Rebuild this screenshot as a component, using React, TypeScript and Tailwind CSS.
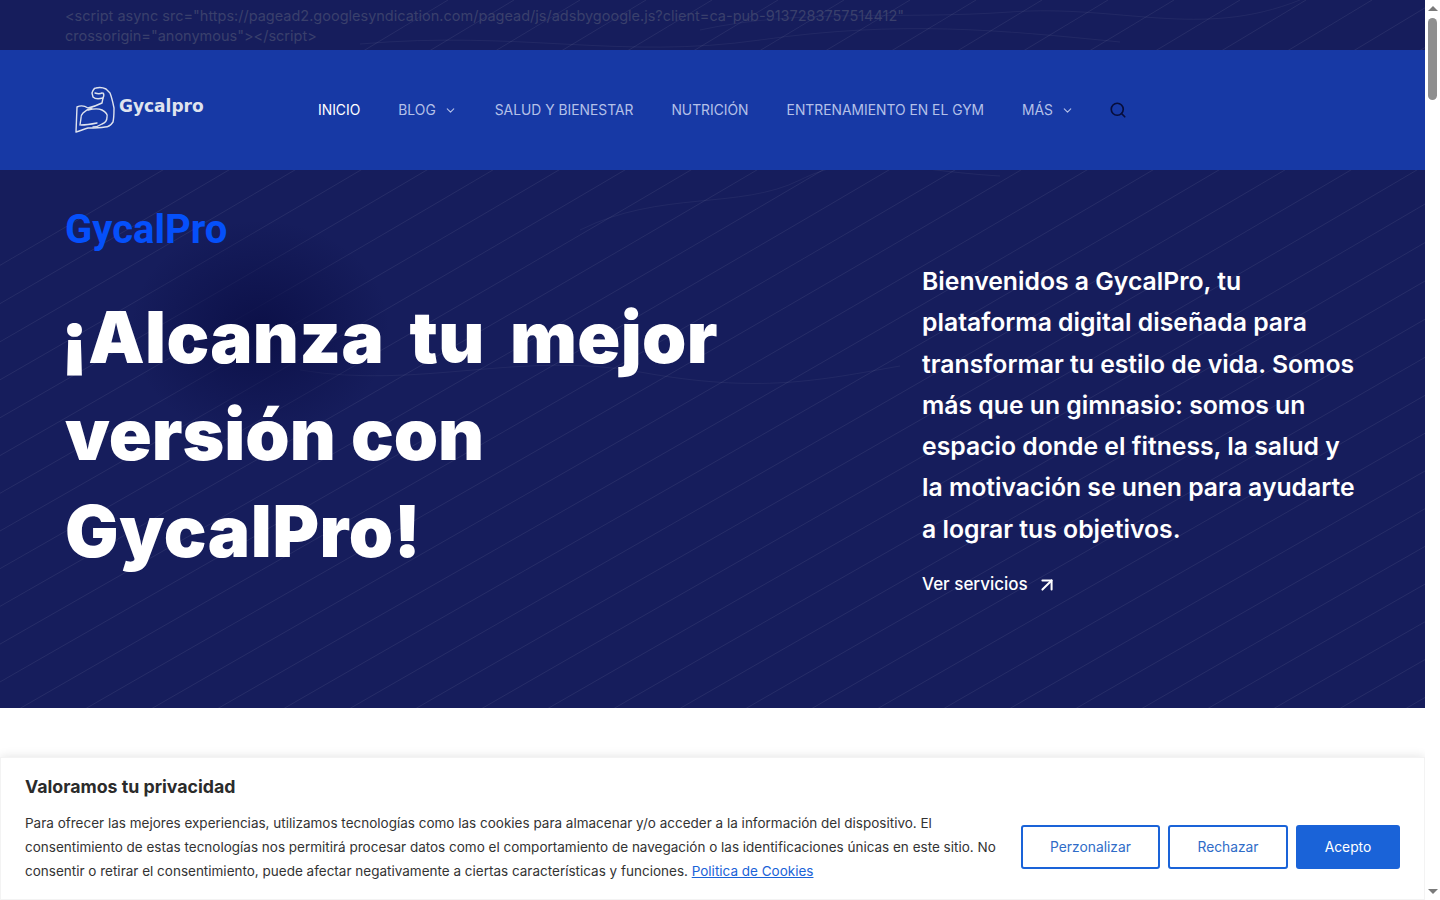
import React from 'react';
import { ArrowUpRight, ChevronDown, Search } from 'lucide-react';

const navItems = [
  { label: 'INICIO', active: true },
  { label: 'BLOG', caret: true },
  { label: 'SALUD Y BIENESTAR' },
  { label: 'NUTRICIÓN' },
  { label: 'ENTRENAMIENTO EN EL GYM' },
  { label: 'MÁS', caret: true },
];

const HeroLines = () => {
  const diagonals = [];
  for (let i = -12; i < 40; i++) {
    const x = i * 66;
    diagonals.push(<path key={i} d={`M${x} 720 C ${x + 320} 535 ${x + 760} 290 ${x + 1240} 0`} />);
  }
  return (
    <svg className="absolute inset-0 h-full w-full" viewBox="0 0 1425 708" preserveAspectRatio="none" fill="none" stroke="#ffffff" strokeWidth="1">
      <g strokeOpacity="0.07">{diagonals}</g>
      <g strokeOpacity="0.05">
        <path d="M700 30 C 800 8 900 20 1010 12 S 1200 40 1300 0" />
        <path d="M360 44 C 520 30 620 60 760 40 S 1000 30 1120 42" />
        <path d="M580 230 C 660 190 740 210 800 180 S 900 170 1000 176" />
        <path d="M300 370 C 420 390 520 350 640 372 S 820 380 900 366" />
      </g>
    </svg>
  );
};

const MuscleLogo = () => (
  <svg width="40" height="48" viewBox="0 0 40 48" fill="none" stroke="#dfe3ee" strokeWidth="1.4" strokeLinejoin="round" strokeLinecap="round" className="shrink-0">
    <path d="M1 46 L2 21 C6 19 10 20 13 22 C17 21 23 19 27 17 L28 12 C24 13 20 13 18 11 L17 7 C18 4 19 2 21 2 C25 1 29 2 31 3 L35 7 C37 12 38 17 39 22 C39 27 39 32 38 36 C36 39 33 41 30 41 C24 42 18 42 13 42 C9 43 5 45 1 46 Z" />
    <path d="M20 7 C23 8 25 8 27 7 M28 12 C29 10 29 8 28 7" />
    <path d="M17 22 C13 23 10 25 8 27 C6 29 6 31 6 32 L5 39" />
    <path d="M6 39 C11 39 17 38 22 37" />
    <path d="M13 24 C17 23 23 22 27 24 C31 26 33 29 32 31 C32 34 30 37 27 38 C24 40 21 41 18 41" />
  </svg>
);

export default function App() {
  return (
    <div className="flex h-[900px] w-full overflow-hidden bg-white font-['Inter',sans-serif]">
      <div className="relative min-w-0 flex-1">
        <div className="relative overflow-hidden bg-[#161d5c]">
          <HeroLines />
          <div className="absolute left-[130px] top-[220px] h-[220px] w-[260px] bg-[radial-gradient(closest-side,#0c1048,transparent)]" />

          <div className="relative h-[50px] px-[65px] pt-[6px] text-[14.5px] leading-[19.5px] text-[#3a406c]">
            &lt;script async src="https://pagead2.googlesyndication.com/pagead/js/adsbygoogle.js?client=ca-pub-9137283757514412"
            <br />
            crossorigin="anonymous"&gt;&lt;/script&gt;
          </div>

          <header className="relative flex h-[120px] items-center bg-[#1739a5] pl-[75px]">
            <div className="flex w-[243px] items-center">
              <MuscleLogo />
              <span className="mb-[7px] ml-[4px] font-['DejaVu_Sans',sans-serif] text-[17px] font-bold text-[#dfe3ee]">
                Gycalpro
              </span>
            </div>
            <nav className="flex items-center gap-[38px] pt-[1px] text-[13.85px]">
              {navItems.map((item) => (
                <a key={item.label} className={`flex items-center gap-[6px] whitespace-nowrap ${item.active ? 'text-white' : 'text-[#b4c0e8]'}`}>
                  {item.label}
                  {item.caret && <ChevronDown size={13} strokeWidth={2} className="ml-[2px] text-[#b4c0e8]" />}
                </a>
              ))}
              <Search size={18} strokeWidth={2.2} className="-ml-[3px] text-[#070d3a]" />
            </nav>
          </header>

          <section className="relative flex h-[538px] justify-between pl-[65px] pr-[66px]">
            <div className="pt-[36px]">
              <div className="font-['Roboto',sans-serif] text-[40px] font-bold leading-[48px] text-[#0550fa]">GycalPro</div>
              <h1 className="-ml-[4px] mt-[35px] text-[71px] font-black leading-[97px] text-white">
                <span className="tracking-[0.3px] [word-spacing:11px]">¡Alcanza tu mejor</span>
                <br />
                <span className="ml-[4px] [word-spacing:1px]">versión con</span>
                <br />
                <span className="ml-[4px] tracking-[0.6px]">GycalPro!</span>
              </h1>
            </div>
            <div className="w-[437px] pt-[91px]">
              <p className="whitespace-nowrap text-[24.75px] font-semibold leading-[41.25px] text-white">
                Bienvenidos a GycalPro, tu
                <br />
                plataforma digital diseñada para
                <br />
                transformar tu estilo de vida. Somos
                <br />
                más que un gimnasio: somos un
                <br />
                espacio donde el fitness, la salud y
                <br />
                la motivación se unen para ayudarte
                <br />
                a lograr tus objetivos.
              </p>
              <a className="mt-[22px] flex items-center gap-[8px] text-[17px] font-medium text-white">
                Ver servicios
                <ArrowUpRight size={22} strokeWidth={2.2} />
              </a>
            </div>
          </section>
        </div>

        <div className="absolute bottom-0 left-0 right-0 flex h-[143px] flex-col border border-[#f3f3f3] bg-white px-[24px] pt-[18px] shadow-[0_0_10px_rgba(0,0,0,0.12)]">
          <div className="text-[17.75px] font-bold leading-[22px] text-[#2b2b2b]">Valoramos tu privacidad</div>
          <div className="mt-[13px] flex items-start justify-between">
            <p className="whitespace-nowrap text-[13.5px] leading-[24px] text-[#333333]">
              Para ofrecer las mejores experiencias, utilizamos tecnologías como las cookies para almacenar y/o acceder a la información del dispositivo. El
              <br />
              consentimiento de estas tecnologías nos permitirá procesar datos como el comportamiento de navegación o las identificaciones únicas en este sitio. No
              <br />
              consentir o retirar el consentimiento, puede afectar negativamente a ciertas características y funciones.{' '}
              <a className="text-[#1a63d8] underline">Politica de Cookies</a>
            </p>
            <div className="mt-[14px] flex gap-[8px] text-[13.8px]">
              <button className="h-[44px] w-[139px] rounded-[3px] border-2 border-[#1a63d8] text-[#2f6cc8]">Perzonalizar</button>
              <button className="h-[44px] w-[120px] rounded-[3px] border-2 border-[#1a63d8] text-[#2f6cc8]">Rechazar</button>
              <button className="h-[44px] w-[104px] rounded-[3px] bg-[#1a63d8] text-white">Acepto</button>
            </div>
          </div>
        </div>
      </div>

      <aside className="relative flex w-[15px] shrink-0 flex-col items-center bg-white">
        <div className="mt-[6px] h-0 w-0 border-x-[5px] border-b-[5px] border-x-transparent border-b-[#7a7a7a]" />
        <div className="mt-[7px] h-[82px] w-[9px] rounded-[5px] bg-[#8f8f8f]" />
        <div className="absolute bottom-[6px] h-0 w-0 border-x-[5px] border-t-[5px] border-x-transparent border-t-[#7a7a7a]" />
      </aside>
    </div>
  );
}
